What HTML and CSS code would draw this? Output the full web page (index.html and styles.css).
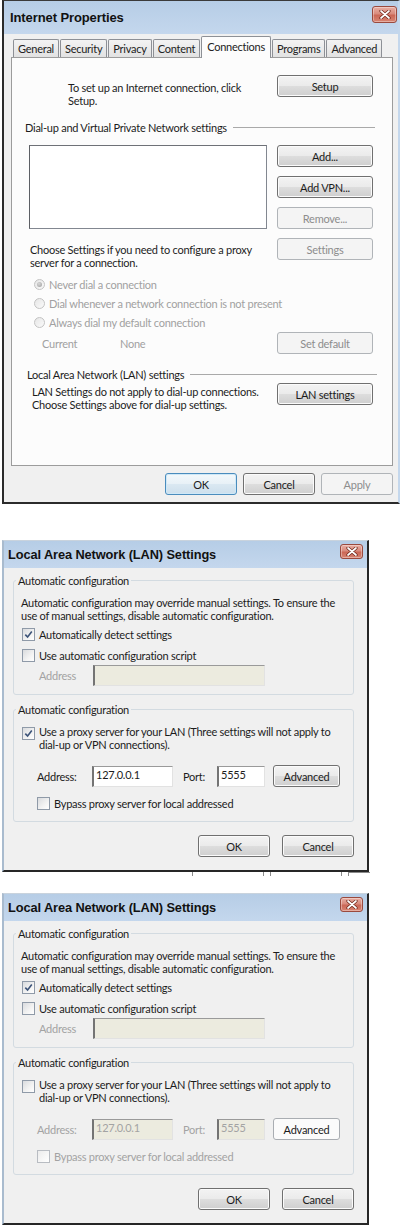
FILE: index.html
```html
<!DOCTYPE html>
<html lang="en">
<head>
<meta charset="utf-8">
<title>Internet Properties</title>
<link rel="stylesheet" href="styles.css">
</head>
<body>
<div class="page">

  <section class="dlg dlg-ip">
    <header class="titlebar tb-ip">
      <span class="title">Internet Properties</span>
      <span class="close close-ip"><svg width="12" height="9" viewBox="0 0 12 9"><path d="M2 1 L10 8 M10 1 L2 8" stroke="#6b2418" stroke-width="3.2" stroke-linecap="round"/><path d="M2 1 L10 8 M10 1 L2 8" stroke="#fff" stroke-width="1.7" stroke-linecap="round"/></svg></span>
    </header>
    <div class="client client-ip">
      <nav class="tabs">
        <span class="tab">General</span>
        <span class="tab">Security</span>
        <span class="tab">Privacy</span>
        <span class="tab">Content</span>
        <span class="tab active">Connections</span>
        <span class="tab">Programs</span>
        <span class="tab">Advanced</span>
      </nav>
      <div class="panel">
        <div class="setup-row">
          <p class="setup-text">To set up an Internet connection, click<br>Setup.</p>
          <button class="btn btn-col-w">Setup</button>
        </div>
        <div class="sep-head vpn-head"><span>Dial-up and Virtual Private Network settings</span></div>
        <div class="vpn-block">
          <div class="vpn-left">
            <div class="listbox"></div>
            <p class="proxy-text">Choose Settings if you need to configure a proxy<br>server for a connection.</p>
          </div>
          <div class="btn-stack">
            <button class="btn btn-col-w">Add...</button>
            <button class="btn btn-col-w">Add VPN...</button>
            <button class="btn btn-col-w disabled">Remove...</button>
            <button class="btn btn-col-w disabled">Settings</button>
          </div>
        </div>
        <ul class="radios">
          <li><span class="radio on"></span>Never dial a connection</li>
          <li><span class="radio"></span>Dial whenever a network connection is not present</li>
          <li><span class="radio"></span>Always dial my default connection</li>
        </ul>
        <div class="current-row">
          <span class="cur-label">Current</span>
          <span class="cur-value">None</span>
          <button class="btn btn-col-w disabled">Set default</button>
        </div>
        <div class="sep-head lan-head"><span>Local Area Network (LAN) settings</span></div>
        <div class="lan-row">
          <p class="lan-text">LAN Settings do not apply to dial-up connections.<br>Choose Settings above for dial-up settings.</p>
          <button class="btn btn-col-w">LAN settings</button>
        </div>
      </div>
      <div class="footer footer-ip">
        <button class="btn btn-foot focused">OK</button>
        <button class="btn btn-foot">Cancel</button>
        <button class="btn btn-foot disabled">Apply</button>
      </div>
    </div>
  </section>

  <section class="dlg dlg-lan lan-a">
    <header class="titlebar tb-lan">
      <span class="title title-lan">Local Area Network (LAN) Settings</span>
      <span class="close close-lan"><svg width="12" height="9" viewBox="0 0 12 9"><path d="M2 1 L10 8 M10 1 L2 8" stroke="#6b2418" stroke-width="3.2" stroke-linecap="round"/><path d="M2 1 L10 8 M10 1 L2 8" stroke="#fff" stroke-width="1.7" stroke-linecap="round"/></svg></span>
    </header>
    <div class="client client-lan">
      <fieldset class="group group-auto">
        <legend>Automatic configuration</legend>
        <p class="desc">Automatic configuration may override manual settings. To ensure the<br>use of manual settings, disable automatic configuration.</p>
        <div class="check-row first"><span class="check on"><svg width="11" height="11" viewBox="0 0 11 11"><path d="M2.3 5.6 L4.6 8 L8.8 2.6" fill="none" stroke="#3d5479" stroke-width="1.6"/></svg></span>Automatically detect settings</div>
        <div class="check-row second"><span class="check"></span>Use automatic configuration script</div>
        <div class="addr-row script-row">
          <span class="lbl lbl-script gray">Address</span>
          <span class="input disabled-input input-script"></span>
        </div>
      </fieldset>
      <fieldset class="group group-proxy">
        <legend>Automatic configuration</legend>
        <div class="proxy-row"><span class="check on"><svg width="11" height="11" viewBox="0 0 11 11"><path d="M2.3 5.6 L4.6 8 L8.8 2.6" fill="none" stroke="#3d5479" stroke-width="1.6"/></svg></span><span>Use a proxy server for your LAN (Three settings will not apply to<br>dial-up or VPN connections).</span></div>
        <div class="addr-row proxy-addr">
          <span class="lbl lbl-addr">Address:</span>
          <span class="input input-addr">127.0.0.1</span>
          <span class="lbl lbl-port">Port:</span>
          <span class="input input-port">5555</span>
          <button class="btn btn-adv">Advanced</button>
        </div>
        <div class="check-row bypass"><span class="check"></span>Bypass proxy server for local addressed</div>
      </fieldset>
      <div class="footer footer-lan">
        <button class="btn btn-foot">OK</button>
        <button class="btn btn-foot">Cancel</button>
      </div>
    </div>
  </section>
  <div class="behind"><span></span><span></span><span class="short"></span></div>

  <section class="dlg dlg-lan lan-b">
    <header class="titlebar tb-lan">
      <span class="title title-lan">Local Area Network (LAN) Settings</span>
      <span class="close close-lan"><svg width="12" height="9" viewBox="0 0 12 9"><path d="M2 1 L10 8 M10 1 L2 8" stroke="#6b2418" stroke-width="3.2" stroke-linecap="round"/><path d="M2 1 L10 8 M10 1 L2 8" stroke="#fff" stroke-width="1.7" stroke-linecap="round"/></svg></span>
    </header>
    <div class="client client-lan">
      <fieldset class="group group-auto">
        <legend>Automatic configuration</legend>
        <p class="desc">Automatic configuration may override manual settings. To ensure the<br>use of manual settings, disable automatic configuration.</p>
        <div class="check-row first"><span class="check on"><svg width="11" height="11" viewBox="0 0 11 11"><path d="M2.3 5.6 L4.6 8 L8.8 2.6" fill="none" stroke="#3d5479" stroke-width="1.6"/></svg></span>Automatically detect settings</div>
        <div class="check-row second"><span class="check"></span>Use automatic configuration script</div>
        <div class="addr-row script-row">
          <span class="lbl lbl-script gray">Address</span>
          <span class="input disabled-input input-script"></span>
        </div>
      </fieldset>
      <fieldset class="group group-proxy">
        <legend>Automatic configuration</legend>
        <div class="proxy-row"><span class="check"></span><span>Use a proxy server for your LAN (Three settings will not apply to<br>dial-up or VPN connections).</span></div>
        <div class="addr-row proxy-addr">
          <span class="lbl lbl-addr gray">Address:</span>
          <span class="input disabled-input input-addr gray">127.0.0.1</span>
          <span class="lbl lbl-port gray">Port:</span>
          <span class="input disabled-input input-port gray">5555</span>
          <button class="btn btn-adv flat">Advanced</button>
        </div>
        <div class="check-row bypass gray"><span class="check light"></span>Bypass proxy server for local addressed</div>
      </fieldset>
      <div class="footer footer-lan">
        <button class="btn btn-foot">OK</button>
        <button class="btn btn-foot">Cancel</button>
      </div>
    </div>
  </section>

</div>
</body>
</html>
```

FILE: styles.css
```css
* { box-sizing: border-box; }

html, body {
  margin: 0;
  padding: 0;
  background: #ffffff;
}

body {
  font-family: Lato, "Open Sans", sans-serif;
  font-size: 11px;
  line-height: 13px;
  letter-spacing: -0.25px;
  color: #1c1c1c;
}

p, ul { margin: 0; padding: 0; }
li { list-style: none; }

.page {
  display: flex;
  flex-direction: column;
  width: 402px;
}

/* ---------- dialog frame ---------- */
.dlg {
  display: flex;
  flex-direction: column;
  overflow: hidden;
  margin-left: 2px;
}

.dlg-ip {
  width: 398px;
  height: 504px;
  border-top: 1px solid #3a3a3a;
  border-left: 2px solid #2b2b2b;
  border-bottom: 2px solid #2b2b2b;
  border-right: 2px solid #c4d7ec;
}

.dlg-lan {
  width: 367px;
  height: 332px;
  border-top: 1px solid #c9d3dd;
  border-left: 2px solid #a9bbce;
  border-right: 2px solid #262626;
  border-bottom: 2px solid #262626;
}

.lan-a { margin-top: 36px; }
.lan-b { margin-top: 17px; }

.titlebar {
  flex: none;
  display: flex;
  justify-content: space-between;
  align-items: center;
  background: linear-gradient(#b6cde6, #c4d7ed);
}

.tb-ip {
  height: 33px;
  padding: 0 1px 0 6px;
}

.tb-lan {
  height: 27px;
  padding: 0 4px 0 4px;
}

.title {
  font-family: "Liberation Sans", Arial, sans-serif;
  font-weight: bold;
  font-size: 13px;
  color: #111;
  letter-spacing: -0.1px;
}

.title-lan {
  font-size: 12.8px;
}

.close {
  display: flex;
  align-items: center;
  justify-content: center;
  align-self: flex-start;
  border: 1px solid #9a4a3e;
  border-radius: 3px;
  background: linear-gradient(#e8aea3 0%, #d98b7d 45%, #cb6756 55%, #d88573 100%);
  box-shadow: inset 0 0 0 1px rgba(255,255,255,0.35);
}

.close-ip {
  width: 25px;
  height: 17px;
  margin-top: 5px;
}

.close-lan {
  width: 23px;
  height: 15px;
  margin-top: 3px;
}

.client {
  flex: 1;
  display: flex;
  flex-direction: column;
  background: #f0f0f0;
}

/* ---------- Internet Properties ---------- */
.client-ip {
  padding: 0 5px 7px 7px;
}

.tabs {
  height: 23px;
  flex: none;
  display: flex;
  align-items: flex-end;
  gap: 1px;
  padding-left: 2px;
}

.tab {
  position: relative;
  height: 18px;
  padding: 0 4px;
  display: flex;
  align-items: center;
  border: 1px solid #8d9096;
  border-bottom: none;
  border-radius: 2px 2px 0 0;
  background: linear-gradient(#f3f3f3, #e2e2e2);
  color: #222;
}

.tab.active {
  z-index: 1;
  height: 22px;
  margin-bottom: -1px;
  padding: 0 5px 3px;
  background: #fcfcfc;
}

.panel {
  flex: none;
  height: 409px;
  border: 1px solid #9c9c9c;
  background: #fcfcfc;
  padding: 0 19px 0 0;
  display: flex;
  flex-direction: column;
}

.btn {
  font-family: inherit;
  font-size: 11px;
  line-height: 13px;
  letter-spacing: inherit;
  color: #1c1c1c;
  height: 22px;
  padding: 0;
  border: 1px solid #707070;
  border-radius: 3px;
  background: linear-gradient(#f3f3f3 0%, #ebebeb 48%, #dddddd 52%, #cfcfcf 100%);
  box-shadow: inset 0 0 0 1px #fbfbfb;
  display: flex;
  align-items: center;
  justify-content: center;
  flex: none;
}

.btn.disabled {
  border-color: #b0b4b8;
  background: #f4f4f4;
  box-shadow: none;
  color: #8d8d8d;
}

.btn.focused {
  border-color: #4a8cbd;
  background: linear-gradient(#f3f8fb 0%, #e8f1f7 48%, #dae8f2 52%, #cddfec 100%);
  box-shadow: inset 0 0 0 1px #cfe8f7;
}

.btn-col-w { width: 96px; }

.setup-row {
  margin-top: 17px;
  display: flex;
  justify-content: space-between;
  align-items: flex-start;
}

.setup-text {
  padding: 6px 0 0 56px;
}

.sep-head {
  display: flex;
  align-items: center;
  height: 13px;
}

.sep-head::after {
  content: "";
  flex: 1;
  height: 1px;
  background: #a9a9a9;
  margin-left: 6px;
}

.vpn-head {
  margin-top: 14px;
  padding-left: 13px;
  margin-right: -2px;
}

.vpn-block {
  margin-top: 11px;
  display: flex;
  justify-content: space-between;
  align-items: flex-start;
}

.vpn-left {
  padding-left: 17px;
}

.listbox {
  width: 238px;
  height: 84px;
  background: #ffffff;
  border: 1px solid #828790;
  border-left-color: #5c5f64;
  border-top-color: #6e7177;
}

.proxy-text {
  margin-top: 14px;
  padding-left: 1px;
}

.btn-stack {
  display: flex;
  flex-direction: column;
  gap: 9px;
}

.radios {
  margin-top: 6px;
  padding-left: 22px;
  color: #a1a1a1;
}

.radios li {
  height: 19px;
  display: flex;
  align-items: center;
  gap: 4px;
}

.radio {
  width: 11px;
  height: 11px;
  border-radius: 50%;
  border: 1px solid #c3c3c3;
  background: linear-gradient(135deg, #e6e6e6, #fafafa);
  display: flex;
  align-items: center;
  justify-content: center;
}

.radio.on::after {
  content: "";
  width: 5px;
  height: 5px;
  border-radius: 50%;
  background: radial-gradient(circle at 40% 35%, #d8d8d8, #9c9c9c);
}

.current-row {
  height: 22px;
  display: flex;
  align-items: center;
  padding-left: 30px;
  color: #a1a1a1;
}

.cur-label { width: 78px; }
.cur-value { flex: 1; }

.lan-head {
  margin-top: 14px;
  padding-left: 15px;
  margin-right: -4px;
}

.lan-row {
  margin-top: 2px;
  display: flex;
  justify-content: space-between;
  align-items: flex-start;
}

.lan-text {
  padding: 2px 0 0 20px;
}

.footer {
  display: flex;
  justify-content: flex-end;
  flex: none;
}

.footer-ip {
  margin-top: 7px;
  gap: 6px;
}

.btn-foot { width: 72px; }

/* ---------- LAN settings ---------- */
.client-lan {
  padding: 6px 13px 12px 9px;
}

.group {
  margin: 0;
  border: 1px solid #d3dbe1;
  border-radius: 3px;
  padding: 0 0 0 7px;
  min-width: 0;
}

.group legend {
  padding: 0 2px;
  margin-left: -5px;
  line-height: 13px;
}

.group-auto { padding-bottom: 8px; }

.group-proxy {
  margin-top: 8px;
  padding-bottom: 11px;
}

.desc { margin-top: 9px; }

.check-row {
  height: 13px;
  display: flex;
  align-items: center;
  gap: 4px;
  padding-left: 1px;
}

.check-row.first { margin-top: 6px; }
.check-row.second { margin-top: 8px; }

.check {
  flex: none;
  width: 13px;
  height: 13px;
  border: 1px solid #8f9aa8;
  background: linear-gradient(135deg, #d9dbde 0%, #f3f3f3 60%, #ffffff 100%);
  display: flex;
  align-items: center;
  justify-content: center;
}

.check.light {
  border-color: #b8bcc2;
  background: linear-gradient(135deg, #ececec, #ffffff);
}

.addr-row {
  display: flex;
  align-items: center;
}

.script-row {
  margin-top: 3px;
  padding-left: 18px;
}

.lbl-script { width: 54px; }

.input {
  height: 21px;
  background: #ffffff;
  border: 1px solid;
  border-color: #9a9a9a #e2e2e2 #e2e2e2 #747474;
  border-left-width: 2px;
  padding: 1px 0 0 2px;
  line-height: 13px;
  flex: none;
}

.disabled-input {
  background: #ecebdf;
}

.input-script { width: 172px; }

.gray { color: #a3a3a3; }

.proxy-row {
  margin-top: 9px;
  display: flex;
  align-items: flex-start;
  gap: 4px;
  padding-left: 1px;
}

.proxy-row .check { margin-top: 2px; }

.proxy-addr {
  margin-top: 14px;
  padding-left: 16px;
}

.lbl-addr { width: 55px; }
.input-addr { width: 81px; }
.lbl-port { width: 34px; margin-left: 10px; }
.input-port { width: 48px; }

.btn-adv {
  width: 67px;
  margin-left: 8px;
}

.btn-adv.flat {
  border-color: #a9adb2;
  background: #fbfbfb;
  box-shadow: none;
}

.check-row.bypass {
  margin-top: 10px;
  padding-left: 16px;
}

.footer-lan {
  margin-top: 13px;
  gap: 12px;
}

/* window behind the LAN dialog */
.behind {
  height: 4px;
  display: flex;
  gap: 6px;
  padding-left: 192px;
}

.behind span {
  width: 72px;
  height: 4px;
  border-left: 1px solid #8a8a8a;
  border-right: 1px solid #8a8a8a;
}

.behind span.short {
  width: 22px;
  border-right: none;
  border-top: 1px solid #8a8a8a;
}
```
